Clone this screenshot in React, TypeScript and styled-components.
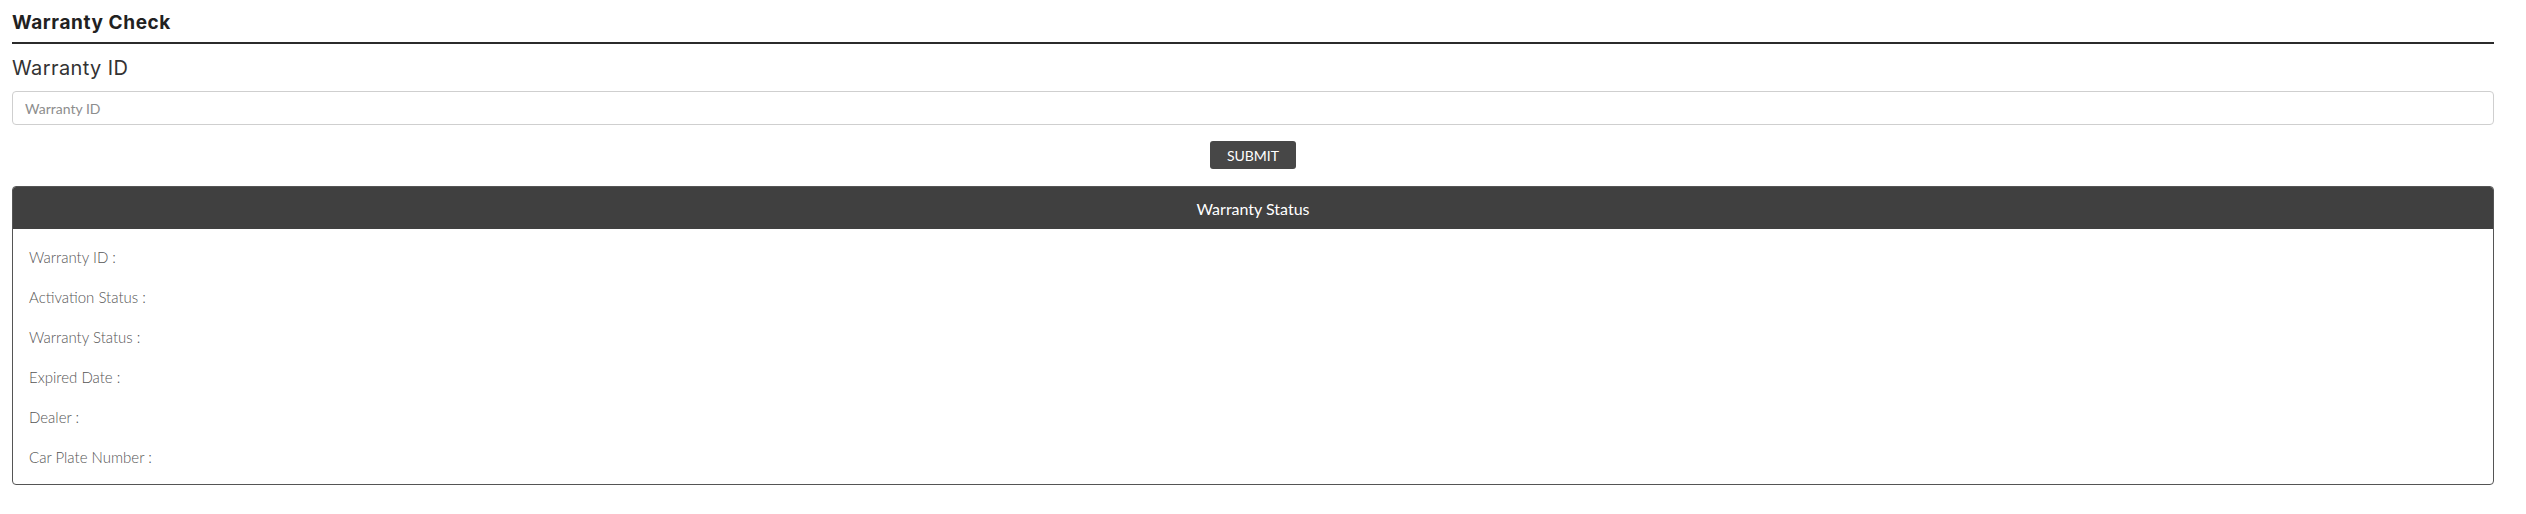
import React from 'react';
import styled, { createGlobalStyle } from 'styled-components';

const GlobalStyle = createGlobalStyle`
  html, body {
    margin: 0;
    padding: 0;
    background: #fff;
  }
  body {
    font-family: "Lato", "Liberation Sans", sans-serif;
  }
`;

const Page = styled.div`
  padding: 10px 32px 0 12px;
`;

const Title = styled.h1`
  margin: 0;
  padding: 0 0 6px;
  font-family: "Inter", "Noto Sans", sans-serif;
  font-size: 19px;
  font-weight: 700;
  letter-spacing: 0.6px;
  line-height: 26px;
  color: #212121;
  border-bottom: 2px solid #2b2b2b;
`;

const FieldLabel = styled.label`
  display: block;
  margin: 12px 0 11px;
  font-family: "Inter", "Noto Sans", sans-serif;
  font-size: 20px;
  font-weight: 400;
  letter-spacing: 0.4px;
  line-height: 24px;
  color: #333;
`;

const Input = styled.input`
  display: block;
  box-sizing: border-box;
  width: 100%;
  height: 34px;
  padding: 0 12px;
  font-family: "Lato", sans-serif;
  font-size: 14px;
  color: #333;
  border: 1px solid #cfcfcf;
  border-radius: 4px;
  outline: none;

  &::placeholder {
    color: #8d8d8d;
  }
`;

const Actions = styled.div`
  display: flex;
  justify-content: center;
  padding: 16px 0 17px;
`;

const SubmitButton = styled.button`
  width: 86px;
  height: 28px;
  font-family: "Lato", sans-serif;
  font-size: 14px;
  color: #fff;
  background: #474747;
  border: none;
  border-radius: 3px;
  cursor: pointer;
`;

const Card = styled.section`
  border: 1px solid #555;
  border-radius: 4px;
  overflow: hidden;
`;

const CardHeader = styled.div`
  height: 42px;
  display: flex;
  align-items: center;
  justify-content: center;
  background: #404040;
  color: #fff;
  font-size: 16px;
  font-weight: 400;
`;

const CardBody = styled.div`
  padding: 8px 16px 7px;
`;

const Row = styled.div`
  height: 40px;
  line-height: 40px;
  font-size: 15px;
  font-weight: 300;
  color: #555;
`;

const fields = [
  'Warranty ID',
  'Activation Status',
  'Warranty Status',
  'Expired Date',
  'Dealer',
  'Car Plate Number',
];

const App: React.FC = () => (
  <>
    <GlobalStyle />
    <Page>
      <Title>Warranty Check</Title>
      <FieldLabel htmlFor="warranty-id">Warranty ID</FieldLabel>
      <Input id="warranty-id" placeholder="Warranty ID" />
      <Actions>
        <SubmitButton type="button">SUBMIT</SubmitButton>
      </Actions>
      <Card>
        <CardHeader>Warranty Status</CardHeader>
        <CardBody>
          {fields.map((f) => (
            <Row key={f}>{f} :</Row>
          ))}
        </CardBody>
      </Card>
    </Page>
  </>
);

export default App;
